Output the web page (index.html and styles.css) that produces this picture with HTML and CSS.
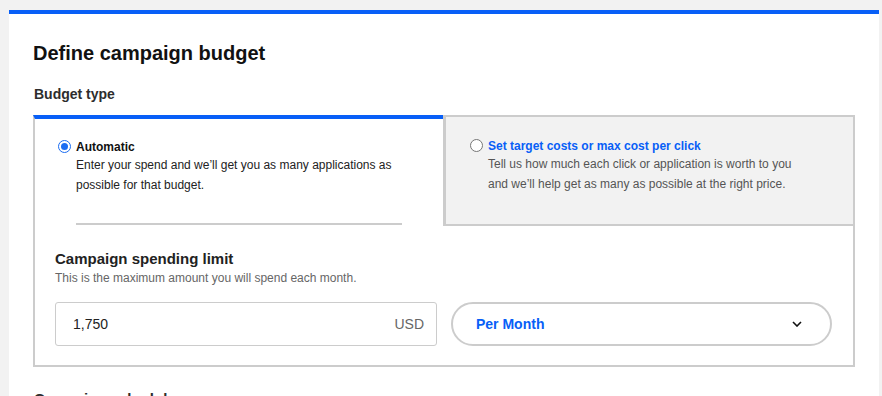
FILE: index.html
```html
<!DOCTYPE html>
<html>
<head>
<meta charset="utf-8">
<link rel="stylesheet" href="styles.css">
</head>
<body>
<div class="card">
  <h1 class="title">Define campaign budget</h1>
  <h2 class="section-label">Budget type</h2>
  <div class="budget-box">
    <div class="tabs">
      <div class="tab tab-active">
        <span class="radio radio-on"></span>
        <div class="tab-text">
          <div class="tab-title">Automatic</div>
          <div class="tab-desc">Enter your spend and we’ll get you as many applications as possible for that budget.</div>
        </div>
      </div>
      <div class="tab tab-inactive">
        <span class="radio radio-off"></span>
        <div class="tab-text">
          <div class="tab-title link">Set target costs or max cost per click</div>
          <div class="tab-desc muted">Tell us how much each click or application is worth to you and we’ll help get as many as possible at the right price.</div>
        </div>
      </div>
    </div>
    <div class="limit">
      <div class="limit-title">Campaign spending limit</div>
      <div class="limit-sub">This is the maximum amount you will spend each month.</div>
      <div class="limit-row">
        <div class="amount">
          <span class="amount-value">1,750</span>
          <span class="amount-cur">USD</span>
        </div>
        <div class="period">
          <span class="period-value">Per Month</span>
          <svg class="chev" width="10" height="6" viewBox="0 0 10 6"><path d="M1 1 L5 5 L9 1" fill="none" stroke="#111" stroke-width="1.6"/></svg>
        </div>
      </div>
    </div>
  </div>
  <h2 class="section-label next">Campaign schedule</h2>
</div>
</body>
</html>
```

FILE: styles.css
```css
* { box-sizing: border-box; }
html, body { margin: 0; padding: 0; }
body {
  background: #f2f2f2;
  font-family: "Liberation Sans", Arial, Helvetica, sans-serif;
  color: #111;
  padding: 10px 3px 0 9px;
  height: 396px;
  overflow: hidden;
}
.card {
  width: 870px;
  background: #fff;
  border-top: 4px solid #085ff7;
  padding: 0 24px 20px 24px;
  min-height: 400px;
}
.title {
  margin: 0;
  padding-top: 27px;
  font-size: 20px;
  line-height: 24px;
  font-weight: bold;
  color: #111;
}
.section-label {
  margin: 19px 0 0 1px;
  font-size: 14px;
  line-height: 20px;
  font-weight: bold;
  color: #2d2d2d;
}
.section-label.next { margin-top: 22px; font-size: 15px; }
.budget-box {
  margin-top: 11px;
  width: 822px;
  border: 2px solid #ccc;
  border-top: none;
}
.tabs {
  display: flex;
  margin-left: -2px;
  margin-right: -2px;
}
.tab {
  display: flex;
  align-items: flex-start;
  gap: 5px;
}
.tab-active {
  width: 410px;
  border-top: 4px solid #085ff7;
  border-left: 2px solid #ccc;
  padding: 20px 41px 0 23px;
}
.tab-inactive {
  flex: 1;
  background: #f2f2f2;
  border: 2px solid #ccc;
  border-left-width: 3px;
  padding: 21px 20px 0 24px;
  height: 111px;
}
.tab-text { flex: 1; }
.tab-inactive .tab-text { flex: none; max-width: 318px; }
.tab-active .tab-text {
  border-bottom: 2px solid #ccc;
  padding-bottom: 28px;
}
.radio {
  flex: none;
  width: 13px;
  height: 13px;
  border-radius: 50%;
  margin-top: 1px;
  position: relative;
}
.radio-on {
  border: 1.5px solid #1a6cf2;
  background: #fff;
}
.radio-on::after {
  content: "";
  position: absolute;
  left: 1.5px; top: 1.5px;
  width: 7px; height: 7px;
  border-radius: 50%;
  background: #1a6cf2;
}
.radio-off {
  width: 13px; height: 13px;
  border: 1px solid #767676;
  background: #fff;
}
.tab-title {
  font-size: 12px;
  line-height: 16px;
  font-weight: bold;
  color: #111;
}
.tab-title.link { color: #085ff7; }
.tab-desc {
  font-size: 12px;
  line-height: 20px;
  color: #222;
}
.tab-desc.muted { color: #555; }
.limit {
  padding: 23px 20px 19px 20px;
}
.limit-title {
  font-size: 15px;
  line-height: 20px;
  font-weight: bold;
  color: #222;
}
.limit-sub {
  font-size: 12px;
  line-height: 18px;
  color: #666;
}
.limit-row {
  display: flex;
  gap: 14px;
  margin-top: 15px;
}
.amount {
  width: 382px;
  height: 44px;
  border: 1px solid #ccc;
  border-radius: 3px;
  display: flex;
  align-items: center;
  justify-content: space-between;
  padding: 0 12px 0 17px;
  font-size: 14px;
  color: #222;
}
.amount-cur { color: #666; }
.period {
  width: 381px;
  height: 44px;
  border: 2px solid #ccc;
  border-radius: 22px;
  display: flex;
  align-items: center;
  justify-content: space-between;
  padding: 0 28px 0 23px;
}
.period-value {
  font-size: 14px;
  font-weight: bold;
  color: #085ff7;
}
.chev { display: block; }
```
